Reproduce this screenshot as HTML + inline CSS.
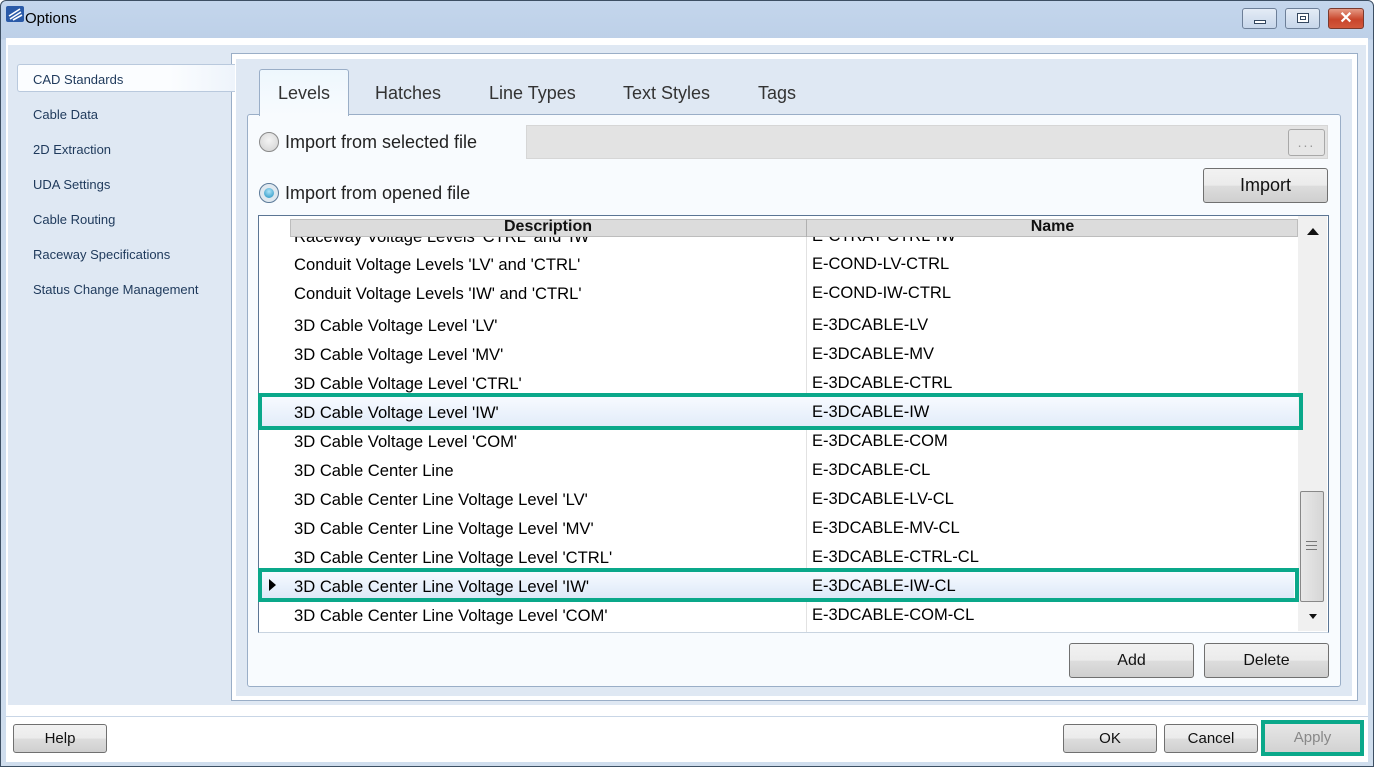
<!DOCTYPE html>
<html><head><meta charset="utf-8"><style>
*{box-sizing:border-box;margin:0;padding:0}
body{width:1374px;height:767px;overflow:hidden;font-family:"Liberation Sans",Arial,sans-serif;background:#fff;position:relative}
.a{position:absolute}
.btn{position:absolute;border:1px solid #707070;border-radius:3px;background:linear-gradient(#f2f2f2 0%,#ebebeb 50%,#dddddd 51%,#cfcfcf 100%);font-size:16px;color:#111;text-align:center}
.nav{position:absolute;left:33px;font-size:13px;color:#1e395b}
.tab{position:absolute;top:83px;font-size:18px;color:#333}
.row{position:absolute;left:294px;font-size:16.6px;color:#000}
.nm{position:absolute;left:812px;font-size:16.5px;color:#000}
</style></head><body>
<div class="a" style="left:0;top:0;width:1374px;height:767px;border:1px solid #3d4f63;border-radius:6px 6px 0 0;background:linear-gradient(#c4d6ec 0,#bdd0e8 38px,#c8d8ec 39px,#cfdded 767px)"></div>
<svg class="a" style="left:6px;top:6px" width="18" height="16" viewBox="0 0 18 16"><rect x="0" y="0" width="18" height="16" rx="2" fill="#2a5aa8"/><path d="M3 10 L14 3 M4 13 L15 6 M7 14 L16 9" stroke="#fff" stroke-width="1.6"/></svg>
<div class="a" style="left:25px;top:10px;font-size:15px;color:#000">Options</div>
<div class="a" style="left:1242px;top:8px;width:35px;height:21px;border:1px solid #6d7f98;border-radius:3px;background:linear-gradient(#e4ecf6,#c7d6ea)"><div class="a" style="left:11px;top:11px;width:12px;height:4px;border:1px solid #34475f;background:#fff"></div></div>
<div class="a" style="left:1285px;top:8px;width:35px;height:21px;border:1px solid #6d7f98;border-radius:3px;background:linear-gradient(#e4ecf6,#c7d6ea)"><div class="a" style="left:11px;top:4px;width:12px;height:10px;border:1px solid #34475f;background:#fff"><div class="a" style="left:2px;top:2px;width:6px;height:4px;border:1px solid #34475f"></div></div></div>
<div class="a" style="left:1328px;top:8px;width:36px;height:21px;border:1px solid #7a3a2e;border-radius:3px;background:linear-gradient(#e59a85,#c9462c 55%,#d2583c)"><div class="a" style="left:0;top:0;width:34px;text-align:center;font-size:16px;font-weight:bold;color:#fff;line-height:19px">✕</div></div>
<div class="a" style="left:6px;top:38px;width:1362px;height:724px;background:#fff"></div>
<div class="a" style="left:8px;top:45px;width:1358px;height:660px;background:#dfe8f3"></div>
<div class="a" style="left:231px;top:53px;width:1127px;height:648px;border:1px solid #9aaec7;background:#fff"></div>
<div class="a" style="left:236px;top:59px;width:1116px;height:637px;background:#dfe8f3"></div>
<div class="a" style="left:17px;top:64px;width:218px;height:28px;border:1px solid #b9c9dd;border-right:none;border-radius:3px 0 0 3px;background:linear-gradient(90deg,#fbfdff 70%,#eef4fb)"></div>
<div class="nav" style="top:72px">CAD Standards</div>
<div class="nav" style="top:107px">Cable Data</div>
<div class="nav" style="top:142px">2D Extraction</div>
<div class="nav" style="top:177px">UDA Settings</div>
<div class="nav" style="top:212px">Cable Routing</div>
<div class="nav" style="top:247px">Raceway Specifications</div>
<div class="nav" style="top:282px">Status Change Management</div>
<div class="a" style="left:247px;top:114px;width:1094px;height:573px;border:1px solid #9aaec7;border-radius:3px;background:#f8fbfe"></div>
<div class="a" style="left:259px;top:69px;width:90px;height:47px;border:1px solid #9aaec7;border-bottom:none;border-radius:3px 3px 0 0;background:linear-gradient(#eef7fd,#f8fbfe)"></div>
<div class="tab" style="left:278px">Levels</div>
<div class="tab" style="left:375px">Hatches</div>
<div class="tab" style="left:489px">Line Types</div>
<div class="tab" style="left:623px">Text Styles</div>
<div class="tab" style="left:758px">Tags</div>
<div class="a" style="left:259px;top:132px;width:20px;height:20px;border-radius:50%;border:1px solid #8a8a8a;background:radial-gradient(circle at 50% 40%,#f4f4f4,#d0d0d0)"></div>
<div class="a" style="left:285px;top:132px;font-size:18px;color:#222">Import from selected file</div>
<div class="a" style="left:259px;top:183px;width:20px;height:20px;border-radius:50%;border:1px solid #5c7a99;background:#dfe8ef"><div class="a" style="left:4px;top:4px;width:10px;height:10px;border-radius:50%;background:radial-gradient(circle at 50% 35%,#aee4f8,#1d8fc0)"></div></div>
<div class="a" style="left:285px;top:183px;font-size:18px;color:#222">Import from opened file</div>
<div class="a" style="left:526px;top:125px;width:802px;height:34px;background:#e3e3e3;border:1px solid #d6d6d6"></div>
<div class="a" style="left:1288px;top:129px;width:37px;height:27px;border:1px solid #a8a8a8;border-radius:3px;background:#e6e6e6;color:#999;font-size:14px;text-align:center;line-height:24px;letter-spacing:2px">...</div>
<div class="btn" style="left:1203px;top:168px;width:125px;height:35px;line-height:33px;font-size:18px">Import</div>
<div class="a" style="left:258px;top:215px;width:1071px;height:418px;border:1px solid #5b7594;border-bottom-color:#c9d4e0;background:#fff;overflow:hidden">
 <div class="a" style="left:0;top:21px;width:1040px;height:14px;overflow:hidden"><div class="a" style="left:35px;top:-10px;font-size:16.6px">Raceway Voltage Levels 'CTRL' and 'IW'</div><div class="a" style="left:553px;top:-10px;font-size:16.5px">E-CTRAY-CTRL-IW</div></div>
</div>
<div class="a" style="left:806px;top:236px;width:1px;height:396px;background:#e2e2e2"></div>
<div class="a" style="left:290px;top:219px;width:1008px;height:18px;background:#dcdcdc;border:1px solid #bdbdbd"></div>
<div class="a" style="left:806px;top:219px;width:1px;height:18px;background:#b0b0b0"></div>
<div class="a" style="left:290px;top:218px;width:516px;text-align:center;font-size:16px;font-weight:bold;color:#111">Description</div>
<div class="a" style="left:807px;top:218px;width:491px;text-align:center;font-size:16px;font-weight:bold;color:#111">Name</div>
<div class="a" style="left:1298px;top:216px;width:29px;height:415px;background:#f0f0f0"></div>
<div class="a" style="left:1307px;top:228px;width:0;height:0;border-left:6px solid transparent;border-right:6px solid transparent;border-bottom:7px solid #111"></div>
<div class="a" style="left:1309px;top:614px;width:0;height:0;border-left:4px solid transparent;border-right:4px solid transparent;border-top:5px solid #111"></div>
<div class="a" style="left:1300px;top:491px;width:24px;height:111px;border:1px solid #888;border-radius:2px;background:linear-gradient(90deg,#e8e8e8,#d6d6d6)"></div>
<div class="a" style="left:1306px;top:541px;width:11px;height:9px;border-top:1px solid #777;border-bottom:1px solid #777"><div style="margin-top:3px;border-top:1px solid #777"></div></div>
<div class="a" style="left:262px;top:397px;width:1036px;height:29px;background:linear-gradient(#f7faff,#e2ecf9)"></div>
<div class="a" style="left:262px;top:572px;width:1032px;height:26px;background:linear-gradient(#f7faff,#dde9f8)"></div>
<div class="a" style="left:258px;top:393px;width:1045px;height:37px;border:4px solid #0aa88a"></div>
<div class="a" style="left:258px;top:568px;width:1041px;height:34px;border:4px solid #0aa88a"></div>
<div class="a" style="left:269px;top:579px;width:0;height:0;border-top:6px solid transparent;border-bottom:6px solid transparent;border-left:7px solid #000"></div>
<div class="row" style="top:255px">Conduit Voltage Levels 'LV' and 'CTRL'</div><div class="nm" style="top:255px">E-COND-LV-CTRL</div>
<div class="row" style="top:284px">Conduit Voltage Levels 'IW' and 'CTRL'</div><div class="nm" style="top:284px">E-COND-IW-CTRL</div>
<div class="row" style="top:316px">3D Cable Voltage Level 'LV'</div><div class="nm" style="top:316px">E-3DCABLE-LV</div>
<div class="row" style="top:345px">3D Cable Voltage Level 'MV'</div><div class="nm" style="top:345px">E-3DCABLE-MV</div>
<div class="row" style="top:374px">3D Cable Voltage Level 'CTRL'</div><div class="nm" style="top:374px">E-3DCABLE-CTRL</div>
<div class="row" style="top:403px">3D Cable Voltage Level 'IW'</div><div class="nm" style="top:403px">E-3DCABLE-IW</div>
<div class="row" style="top:432px">3D Cable Voltage Level 'COM'</div><div class="nm" style="top:432px">E-3DCABLE-COM</div>
<div class="row" style="top:461px">3D Cable Center Line</div><div class="nm" style="top:461px">E-3DCABLE-CL</div>
<div class="row" style="top:490px">3D Cable Center Line Voltage Level 'LV'</div><div class="nm" style="top:490px">E-3DCABLE-LV-CL</div>
<div class="row" style="top:519px">3D Cable Center Line Voltage Level 'MV'</div><div class="nm" style="top:519px">E-3DCABLE-MV-CL</div>
<div class="row" style="top:548px">3D Cable Center Line Voltage Level 'CTRL'</div><div class="nm" style="top:548px">E-3DCABLE-CTRL-CL</div>
<div class="row" style="top:577px">3D Cable Center Line Voltage Level 'IW'</div><div class="nm" style="top:577px">E-3DCABLE-IW-CL</div>
<div class="row" style="top:606px">3D Cable Center Line Voltage Level 'COM'</div><div class="nm" style="top:606px">E-3DCABLE-COM-CL</div>
<div class="btn" style="left:1069px;top:643px;width:125px;height:35px;line-height:33px">Add</div>
<div class="btn" style="left:1204px;top:643px;width:125px;height:35px;line-height:33px">Delete</div>
<div class="a" style="left:6px;top:716px;width:1362px;height:1px;background:#c9d6e6"></div>
<div class="btn" style="left:13px;top:724px;width:94px;height:29px;line-height:27px;font-size:15px">Help</div>
<div class="btn" style="left:1063px;top:724px;width:94px;height:29px;line-height:27px;font-size:15px">OK</div>
<div class="btn" style="left:1164px;top:724px;width:94px;height:29px;line-height:27px;font-size:15px">Cancel</div>
<div class="a" style="left:1261px;top:720px;width:103px;height:36px;border:4px solid #0aa88a;background:linear-gradient(#e6e6e6,#d2d2d2);color:#888;font-size:15px;text-align:center;line-height:28px">Apply</div>
</body></html>
